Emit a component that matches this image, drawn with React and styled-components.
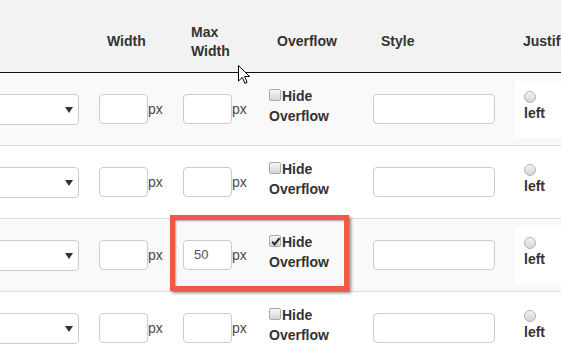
import React from 'react';
import styled, { createGlobalStyle } from 'styled-components';

const GlobalStyle = createGlobalStyle`
  html, body {
    margin: 0;
    padding: 0;
    background: #ffffff;
    overflow: hidden;
  }
  body {
    font-family: "Liberation Sans", Arial, sans-serif;
  }
`;

const COLS = '89px 84px 86px 104px 142px 1fr';

const Page = styled.div`
  position: relative;
  width: 561px;
  height: 354px;
  overflow: hidden;
`;

const HeaderRow = styled.div`
  display: grid;
  grid-template-columns: ${COLS};
  align-items: center;
  height: 73px;
  box-sizing: border-box;
  padding-top: 11px;
  background: #f2f2f2;
  border-bottom: 1px solid #111111;
`;

const HeadCell = styled.div`
  padding-left: 18px;
  font-size: 14px;
  font-weight: bold;
  line-height: 19px;
  color: #333333;
  white-space: nowrap;
`;

const Row = styled.div`
  display: grid;
  grid-template-columns: ${COLS};
  align-items: center;
  height: 73px;
  box-sizing: border-box;
  border-bottom: 1px solid #dddddd;
  background: ${(p) => (p.striped ? '#f9f9f9' : '#ffffff')};
`;

const Cell = styled.div`
  display: flex;
  align-items: center;
  padding-left: 10px;
  font-size: 14px;
  color: #555555;
`;

const SelectCell = styled.div`
  display: flex;
  justify-content: flex-end;
  overflow: hidden;
  padding-right: 10px;
`;

const Select = styled.div`
  position: relative;
  flex-shrink: 0;
  width: 120px;
  height: 31px;
  box-sizing: border-box;
  border: 1px solid #cccccc;
  border-radius: 4px;
  background: #ffffff;

  &::after {
    content: '';
    position: absolute;
    right: 5px;
    top: 12px;
    border-left: 4px solid transparent;
    border-right: 4px solid transparent;
    border-top: 6px solid #333333;
  }
`;

const Input = styled.div`
  width: ${(p) => p.width}px;
  height: 30px;
  box-sizing: border-box;
  border: 1px solid #cccccc;
  border-radius: 4px;
  background: #ffffff;
  padding-left: 10px;
  font-size: 13px;
  line-height: 28px;
  color: #555555;
`;

const Unit = styled.span`
  font-size: 14px;
  color: #4a4a4a;
`;

const OverflowCell = styled.div`
  align-self: start;
  padding: 13px 0 0 10px;
  font-size: 14px;
  font-weight: bold;
  line-height: 20px;
  color: #333333;
`;

const CheckBox = styled.span`
  display: inline-block;
  position: relative;
  width: 12px;
  height: 12px;
  box-sizing: border-box;
  margin-right: 1px;
  vertical-align: 0px;
  border: 1px solid #a9a9a9;
  border-radius: 2px;
  background: linear-gradient(#f6f6f6, #d6d6d6);

  svg {
    position: absolute;
    left: 0;
    top: 0;
  }
`;

const JustifyCell = styled.div`
  align-self: stretch;
  padding: 8px 0 7px 10px;
`;

const RadioBox = styled.div`
  width: 80px;
  height: 100%;
  box-sizing: border-box;
  padding: 10px 9px;
  background: ${(p) => (p.striped ? '#ffffff' : 'transparent')};
  font-size: 14px;
  font-weight: bold;
  line-height: 20px;
  color: #333333;
`;

const Radio = styled.span`
  display: block;
  width: 12px;
  height: 12px;
  box-sizing: border-box;
  border: 1px solid #b3b3b3;
  border-radius: 50%;
  background: linear-gradient(#f3f3f3, #d5d5d5);
`;

const Highlight = styled.div`
  position: absolute;
  left: 170px;
  top: 215px;
  width: 179px;
  height: 76px;
  box-sizing: border-box;
  border: 5px solid #f3574a;
  box-shadow: 2px 2px 3px rgba(0, 0, 0, 0.45), inset 1px 1px 2px rgba(0, 0, 0, 0.35);
  pointer-events: none;
`;

const Cursor = styled.svg`
  position: absolute;
  left: 238px;
  top: 65px;
`;

const rows = [
  { striped: true, max: '', checked: false },
  { striped: false, max: '', checked: false },
  { striped: true, max: '50', checked: true },
  { striped: false, max: '', checked: false },
];

const Check = () => (
  <svg width="12" height="12" viewBox="0 0 12 12">
    <path d="M2.2 5.8 L4.6 8.4 L9.6 2.2" fill="none" stroke="#2a2a2a" strokeWidth="2" />
  </svg>
);

const App = () => {
  return (
    <Page>
      <GlobalStyle />
      <HeaderRow>
        <HeadCell />
        <HeadCell>Width</HeadCell>
        <HeadCell>Max<br />Width</HeadCell>
        <HeadCell>Overflow</HeadCell>
        <HeadCell>Style</HeadCell>
        <HeadCell>Justify</HeadCell>
      </HeaderRow>
      {rows.map((row, idx) => (
        <Row key={idx} striped={row.striped}>
          <SelectCell>
            <Select />
          </SelectCell>
          <Cell>
            <Input width={49} />
            <Unit>px</Unit>
          </Cell>
          <Cell>
            <Input width={49}>{row.max}</Input>
            <Unit>px</Unit>
          </Cell>
          <OverflowCell>
            <CheckBox>{row.checked && <Check />}</CheckBox>
            Hide
            <br />
            Overflow
          </OverflowCell>
          <Cell>
            <Input width={122} />
          </Cell>
          <JustifyCell>
            <RadioBox striped={row.striped}>
              <Radio />
              left
            </RadioBox>
          </JustifyCell>
        </Row>
      ))}
      <Highlight />
      <Cursor width="13" height="20" viewBox="0 0 13 20">
        <path d="M0.5 0.5 L0.5 16 L4.3 12.4 L6.9 18.4 L9.1 17.4 L6.6 11.5 L11.5 11.5 Z" fill="#ffffff" stroke="#000000" strokeWidth="1" />
      </Cursor>
    </Page>
  );
};

export default App;
